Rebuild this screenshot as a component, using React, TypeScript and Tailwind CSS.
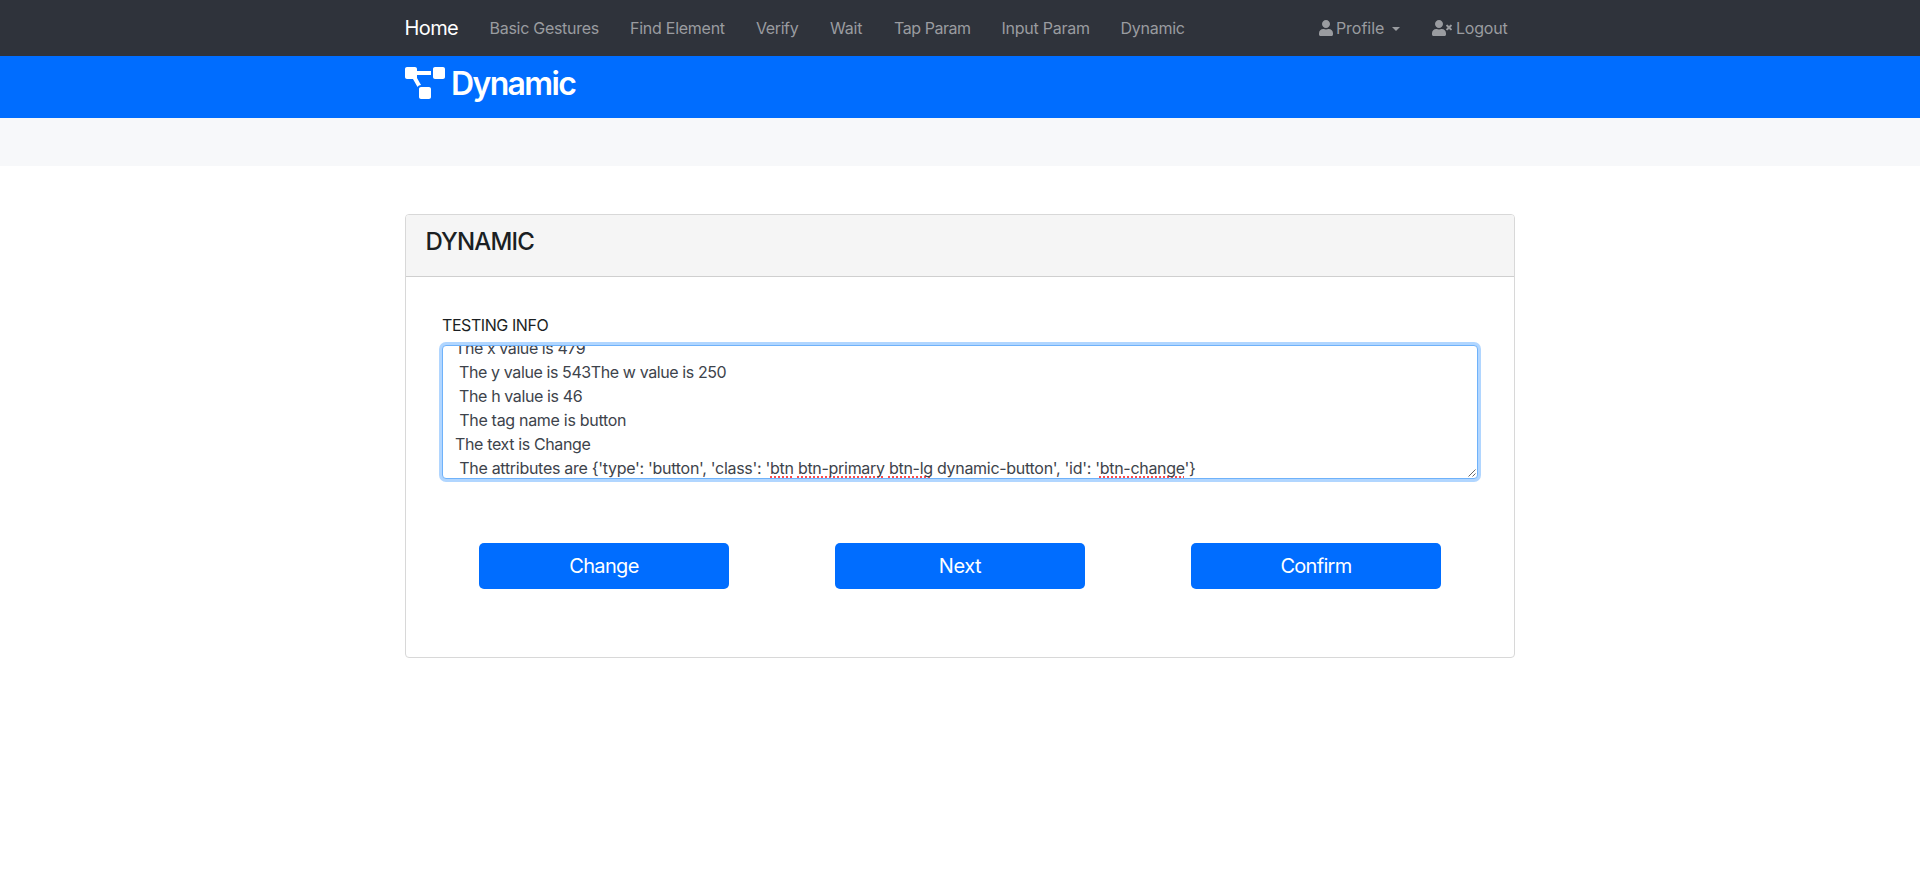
import type { ReactNode } from "react";
import { FaProjectDiagram, FaUser, FaUserTimes } from "react-icons/fa";

const links = [
  { label: "Basic Gestures", cls: "w-[140.5px] tracking-[-0.28px]" },
  { label: "Find Element", cls: "w-[126px] tracking-[-0.26px]" },
  { label: "Verify", cls: "w-[74px] tracking-[-0.4px]" },
  { label: "Wait", cls: "w-16 tracking-[-0.2px]" },
  { label: "Tap Param", cls: "w-[107.5px] tracking-[-0.45px]" },
  { label: "Input Param", cls: "w-[119px] tracking-[-0.25px]" },
  { label: "Dynamic", cls: "tracking-[-0.25px]" },
];

function NavBar() {
  return (
    <nav className="h-14 bg-[#2f333b] text-[#9a9ca0]">
      <div className="mx-auto flex h-full w-[1110px] items-center whitespace-nowrap">
        <a className="-ml-[0.5px] w-[85px] shrink-0 text-xl tracking-[-0.6px] text-white">Home</a>
        {links.map((l) => (
          <a key={l.label} className={`shrink-0 ${l.cls}`}>
            {l.label}
          </a>
        ))}
        <a className="ml-auto flex items-center">
          <FaUser className="h-4 w-3.5" />
          <span className="ml-[3px]">Profile</span>
          <span className="ml-2 mt-px border-x-[4.5px] border-t-[4.5px] border-x-transparent border-t-current" />
        </a>
        <a className="ml-8 mr-[7.5px] flex items-center">
          <FaUserTimes className="h-4 w-5" />
          <span className="ml-[3.5px] tracking-[-0.2px]">Logout</span>
        </a>
      </div>
    </nav>
  );
}

function Misspelled({ children }: { children: ReactNode }) {
  return (
    <span className="underline decoration-[#ff4a4a] decoration-dotted decoration-2 underline-offset-[2px] [text-decoration-skip-ink:none]">
      {children}
    </span>
  );
}

function InfoBox() {
  return (
    <div className="relative h-[134px] overflow-hidden whitespace-pre rounded border border-[#6fb2fa] bg-white pl-3 leading-6 text-[#3d434b] shadow-[0_0_0_3px_#b1d6ff]">
      <div className="-mt-2.5 tracking-[-0.42px]">The x value is 479</div>
      <div className="tracking-[-0.4px]"> The y value is 543The w value is 250</div>
      <div className="tracking-[-0.39px]"> The h value is 46</div>
      <div className="tracking-[-0.3px]"> The tag name is button</div>
      <div className="tracking-[-0.36px]">The text is Change</div>
      <div className="tracking-[-0.29px]">
        {" The attributes are {'type': 'button', 'class': '"}
        <Misspelled>btn</Misspelled> <Misspelled>btn-primary</Misspelled> <Misspelled>btn-lg</Misspelled>
        {" dynamic-button', 'id': '"}
        <Misspelled>btn-change</Misspelled>
        {"'}"}
      </div>
      <svg className="absolute bottom-px right-px h-2 w-2" viewBox="0 0 8 8" fill="none" stroke="#555" strokeWidth="0.9">
        <path d="M0.5 7.5 7.5 0.5M4.5 7.5 7.5 4.5" />
      </svg>
    </div>
  );
}

function Button({ children, className }: { children: ReactNode; className: string }) {
  return (
    <button className={`h-[46px] w-[250px] rounded-[5px] bg-[#006dff] text-xl text-white ${className}`}>{children}</button>
  );
}

export default function App() {
  return (
    <div className="min-h-screen bg-white font-['Inter',sans-serif] text-base text-[#1b1f23]">
      <NavBar />
      <header className="h-[62px] bg-[#006dff] text-white">
        <div className="mx-auto flex w-[1110px] pt-2">
          <FaProjectDiagram className="mt-[3px] h-8 w-10" />
          <h1 className="ml-[6px] mt-px text-[32px] font-semibold leading-[38px] tracking-[-1.65px]">Dynamic</h1>
        </div>
      </header>
      <div className="h-12 bg-[#f7f8fa]" />
      <section className="mx-auto mt-12 h-[444px] w-[1110px] rounded border border-[#d8d8d8]">
        <div className="h-[62px] rounded-t-[3px] border-b border-[#cfcfcf] bg-[#f5f5f5] pl-[19.5px] pt-3">
          <h2 className="text-2xl font-medium leading-[29px] tracking-[-0.85px]">DYNAMIC</h2>
        </div>
        <div className="px-9 pt-9">
          <label className="mb-2 block leading-6 tracking-[-0.42px]">TESTING INFO</label>
          <InfoBox />
        </div>
        <div className="mt-16 flex justify-between pl-[73px] pr-[73px]">
          <Button className="tracking-[-0.65px]">Change</Button>
          <Button className="tracking-[-0.45px]">Next</Button>
          <Button className="tracking-[-0.7px]">Confirm</Button>
        </div>
      </section>
    </div>
  );
}
